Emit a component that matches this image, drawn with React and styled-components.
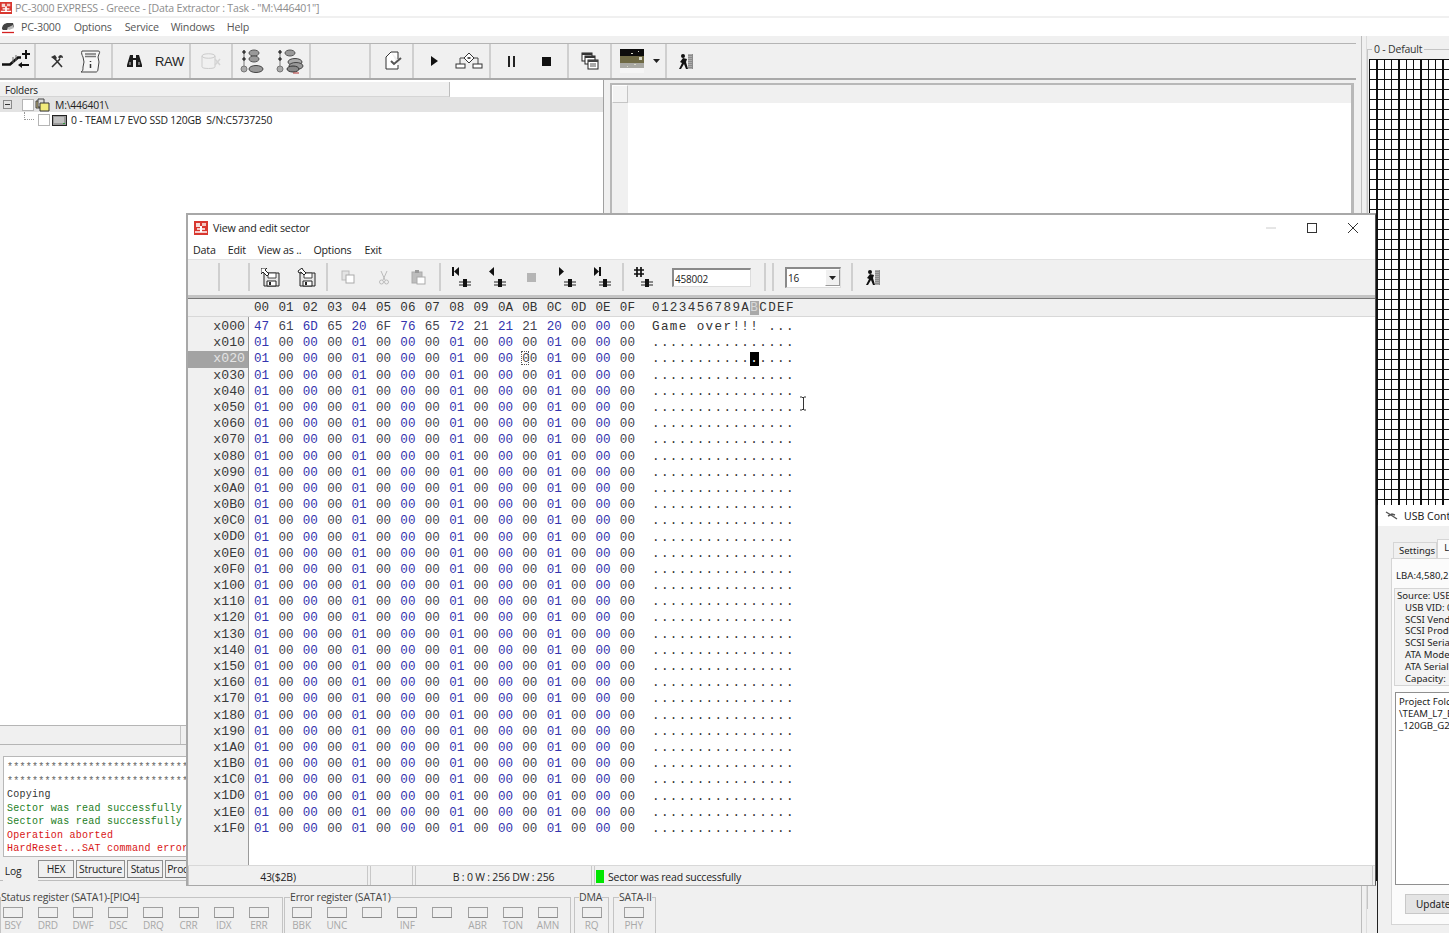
import React from "react";
import styled, { createGlobalStyle } from "styled-components";

const GlobalStyle = createGlobalStyle`
    html, body { margin: 0; padding: 0; background: #f0f0f0; }
    * { box-sizing: border-box; }
`;

const UI_FONT = `"Open Sans", "Liberation Sans", sans-serif`;
const MONO_FONT = `"Liberation Mono", monospace`;

const Screen = styled.div`
    position: relative;
    width: 1449px;
    height: 933px;
    overflow: hidden;
    background: #f0f0f0;
    font-family: ${UI_FONT};
    font-size: 10px;
    letter-spacing: -0.2px;
    color: #222;
`;

const TitleBar = styled.div`
    height: 16px;
    margin-bottom: 2px;
    display: flex;
    align-items: center;
    gap: 3px;
    background: #fff;
    color: #8d8d8d;
    font-size: 10.6px;
    white-space: nowrap;
`;

const MenuBar = styled.div`
    height: ${(p) => p.$height || 18}px;
    display: flex;
    align-items: center;
    background: #fff;
    color: ${(p) => p.$color || "#555"};
    font-size: 10.7px;
    padding-left: ${(p) => p.$left || 0}px;
`;

const MenuItem = styled.span`
    margin-left: ${(p) => p.$before || 0}px;
    margin-right: ${(p) => p.$gap || 12}px;
`;

const Workspace = styled.div`
    display: flex;
    height: 897px;
`;

const MainColumn = styled.div`
    width: 1360px;
    display: flex;
    flex-direction: column;
    flex: none;
`;

const Splitter = styled.div`
    width: 6px;
    flex: none;
    border-left: 1px solid #bdbdbd;
    border-right: 1px solid #dcdcdc;
    margin-left: 1px;
`;

const Toolbar = styled.div`
    height: 44px;
    margin-right: 4px;
    padding-top: 7px;
    flex: none;
`;

const ToolbarInner = styled.div`
    height: 37px;
    display: flex;
    border-top: 1px solid #b4b4b4;
    border-bottom: 2px solid #a9a9a9;
`;

const ToolGroup = styled.div`
    width: ${(p) => p.$width}px;
    flex: none;
    display: flex;
    align-items: center;
    padding-left: ${(p) => p.$pad || 0}px;
    border-right: ${(p) => (p.$plain ? "0" : "2px solid #cfcfcf")};
`;

const Tool = styled.div`
    width: ${(p) => p.$width}px;
    flex: none;
    display: flex;
    justify-content: center;
    align-items: center;
    font-size: 13px;
    font-family: "Liberation Sans", sans-serif;
    color: #222;
`;

const Svg = styled.svg`
    display: block;
    flex: none;
`;

const TopPanes = styled.div`
    height: 645px;
    flex: none;
    display: flex;
`;

const FolderPane = styled.div`
    width: 604px;
    flex: none;
    background: #fff;
    border-right: 1px solid #a0a0a0;
    padding-top: 2px;
`;

const FolderHeader = styled.div`
    width: 450px;
    height: 15px;
    line-height: 17px;
    padding-left: 5px;
    background: #f0f0f0;
    border-right: 1px solid #bdbdbd;
    border-bottom: 1px solid #d5d5d5;
    color: #222;
`;

const TreeRow = styled.div`
    height: ${(p) => p.$height}px;
    display: flex;
    align-items: center;
    padding-left: ${(p) => p.$indent}px;
    background: ${(p) => (p.$selected ? "#e3e3e3" : "#fff")};
    white-space: pre;
    font-size: 10.4px;
`;

const TreeLabel = styled.span`
    margin-left: ${(p) => p.$left}px;
`;

const Expander = styled.span`
    width: 9px;
    height: 9px;
    margin-right: 10px;
    border: 1px solid #8a8a8a;
    position: relative;
    &::after {
        content: "";
        position: absolute;
        left: 1px;
        top: 3px;
        width: 5px;
        height: 1px;
        background: #333;
    }
`;

const TreeElbow = styled.span`
    width: 10px;
    height: 8px;
    margin: -8px 4px 0 0;
    border-left: 1px dotted #999;
    border-bottom: 1px dotted #999;
`;

const CheckBox = styled.span`
    width: 12px;
    height: 12px;
    flex: none;
    margin-right: ${(p) => p.$gap}px;
    background: #fff;
    border: 1px solid #b5b5b5;
`;

const GridPane = styled.div`
    flex: 1;
    margin: 3px 6px 0 6px;
    display: grid;
    grid-template-columns: 16px 1fr;
    grid-template-rows: 18px 1fr;
    background: #fff;
    border: 2px solid #b8b8b8;
    border-right-width: 3px;
    border-bottom: 0;
`;

const GridCorner = styled.div`
    background: #f3f3f3;
    border: 1px solid #c5c5c5;
    border-top-color: #fff;
    border-left-color: #fff;
`;

const GridHead = styled.div`
    background: #f0f0f0;
`;

const GridSide = styled.div`
    background: #f0f0f0;
`;

const GridBody = styled.div`
    background: #fff;
`;

const ScrollStrip = styled.div`
    height: 20px;
    flex: none;
    border-top: 1px solid #b5b5b5;
    border-bottom: 1px solid #b5b5b5;
    display: flex;
    justify-content: flex-end;
    padding-right: 1176px;
`;

const StripHandle = styled.div`
    width: 4px;
    border-left: 1px solid #c5c5c5;
`;

const LogArea = styled.div`
    height: 115px;
    flex: none;
    padding: 11px 0 3px 3px;
`;

const LogBox = styled.div`
    height: 101px;
    background: #fff;
    border: 1px solid #b8b8b8;
    border-right: 0;
    padding: 4px 0 0 3px;
    overflow: hidden;
`;

const LogLine = styled.div`
    height: 13.5px;
    line-height: 13.5px;
    font-family: ${MONO_FONT};
    font-size: 10px;
    letter-spacing: 0.25px;
    white-space: nowrap;
    color: ${(p) => p.$color || "#333"};
`;

const TabRow = styled.div`
    height: 21px;
    flex: none;
    display: flex;
    align-items: flex-start;
    padding-left: 3px;
    border-bottom: 1px solid #bdbdbd;
`;

const LogTab = styled.div`
    width: ${(p) => p.$width}px;
    height: 18px;
    margin-right: ${(p) => p.$gap || 0}px;
    display: flex;
    align-items: center;
    justify-content: center;
    font-size: 10.3px;
    background: #f0f0f0;
    border: 1px solid #8f8f8f;
    border-bottom-color: #777;
`;

const ActiveLogTab = styled.div`
    width: 35px;
    height: 21px;
    padding: 1px 15px 0 0;
    display: flex;
    align-items: center;
    justify-content: center;
    font-size: 10.3px;
    background: #f0f0f0;
`;

const Registers = styled.div`
    display: flex;
    flex: 1;
    align-items: flex-start;
    padding-top: 11px;
`;

const RegisterGroup = styled.fieldset`
    width: ${(p) => p.$width}px;
    height: 60px;
    flex: none;
    margin: 0 ${(p) => p.$gap || 0}px 0 0;
    padding: 0;
    border: 1px solid #c4c4c4;
    min-width: 0;
`;

const RegisterLegend = styled.legend`
    padding: 0;
    margin-left: ${(p) => p.$left || 0}px;
    font-size: 10.5px;
    line-height: 11px;
    color: #444;
    white-space: nowrap;
`;

const LedRow = styled.div`
    display: flex;
    margin: 4px 0 0 ${(p) => p.$left || 0}px;
`;

const Led = styled.div`
    width: 35.2px;
    flex: none;
    display: flex;
    flex-direction: column;
    align-items: center;
    gap: 1px;
    color: #a8a8a8;
    font-size: 10px;
    line-height: 13px;
`;

const LedBox = styled.div`
    width: 20px;
    height: 11px;
    background: #f0f0f0;
    border: 1px solid #a0a0a0;
    border-bottom-color: #8c8c8c;
`;

const Sidebar = styled.div`
    flex: 1;
    padding-top: 7px;
    min-width: 0;
`;

const BlockGroup = styled.div`
    position: relative;
    height: 860px;
    border-top: 1px solid #c4c4c4;
    border-left: 1px solid #c4c4c4;
    padding: 9px 0 0 1px;
    margin-top: 6px;
`;

const BlockLegend = styled.span`
    position: absolute;
    top: -6px;
    left: 4px;
    padding: 0 2px;
    background: #f0f0f0;
    font-size: 10.5px;
    line-height: 11px;
    color: #333;
`;

const BlockMap = styled.div`
    height: 822px;
    background-color: #fff;
    background-image:
        repeating-linear-gradient(to right, #111 0 1.3px, transparent 1.3px 7.33px),
        repeating-linear-gradient(to bottom, #111 0 1.2px, transparent 1.2px 10px),
        repeating-linear-gradient(to right, transparent 0 7.33px, #8a8a8a 7.33px 8.8px, transparent 8.8px 14.66px);
`;

/* floating child windows */
const SectorWindow = styled.div`
    position: absolute;
    left: 186px;
    top: 213px;
    width: 1190px;
    height: 673px;
    display: flex;
    flex-direction: column;
    background: #f0f0f0;
    border: 1px solid #a8a8a8;
    border-top-width: 2px;
    border-left-width: 2px;
    border-right: 1px solid #555;
`;

const WindowTitle = styled.div`
    height: 25px;
    flex: none;
    display: flex;
    align-items: center;
    gap: 5px;
    padding: 0 4px 0 6px;
    background: #fff;
    font-size: 10.7px;
    color: #222;
`;

const TitleText = styled.span`
    flex: 1;
`;

const WindowControl = styled.div`
    width: 36px;
    flex: none;
    display: flex;
    justify-content: center;
`;

const SectorToolbar = styled.div`
    height: 39px;
    flex: none;
    display: flex;
    align-items: center;
    padding-bottom: 1px;
    background: #f0f0f0;
    border-top: 1px solid #e2e2e2;
    border-bottom: 3px solid #c4c4c4;
`;

const SectorGroup = styled.div`
    width: ${(p) => p.$width}px;
    height: 28px;
    flex: none;
    display: flex;
    align-items: center;
    padding-left: ${(p) => p.$pad || 0}px;
    border-right: ${(p) => (p.$plain ? "0" : "2px solid #cfcfcf")};
`;

const SectorInput = styled.div`
    width: 79px;
    height: 19px;
    margin-left: 18px;
    background: #fff;
    padding-left: 1px;
    line-height: 18px;
    font-size: 10px;
    border: 1px solid #fff;
    border-top: 2px solid #8a8a8a;
    border-left: 2px solid #8a8a8a;
    border-bottom-color: #ddd;
    border-right-color: #ddd;
`;

const SectorSelect = styled.div`
    width: 56px;
    height: 21px;
    display: flex;
    justify-content: space-between;
    align-items: center;
    background: #fff;
    padding-left: 1px;
    font-size: 10px;
    border: 1px solid #ddd;
    border-top: 2px solid #8a8a8a;
    border-left: 2px solid #8a8a8a;
`;

const SelectButton = styled.div`
    width: 15px;
    height: 17px;
    display: flex;
    justify-content: center;
    align-items: center;
    background: #f0f0f0;
    border: 1px solid #999;
    border-top-color: #fff;
    border-left-color: #fff;
`;

const HexHeader = styled.div`
    height: 19px;
    flex: none;
    display: flex;
    align-items: center;
    padding-left: 66px;
    background: #f0f0f0;
    border-top: 1px solid #777;
    border-bottom: 1px solid #d8d8d8;
    font-family: ${MONO_FONT};
    font-size: 12.6px;
    letter-spacing: 0;
    color: #333;
`;

const HeaderCell = styled.span`
    width: 24.4px;
    flex: none;
`;

const HexBody = styled.div`
    flex: 1;
    display: flex;
    min-height: 0;
`;

const Gutter = styled.div`
    width: 61px;
    flex: none;
    padding-top: 2px;
    background: #f0f0f0;
    border-right: 1px solid #9a9a9a;
`;

const GutterLabel = styled.div`
    height: 16.2px;
    line-height: 16.2px;
    padding-right: 3px;
    text-align: right;
    font-family: ${MONO_FONT};
    font-size: 13.2px;
    letter-spacing: 0;
    color: ${(p) => (p.$selected ? "#e4e4e4" : "#3a3a3a")};
    background: ${(p) => (p.$selected ? "#a3a3a3" : "transparent")};
`;

const HexData = styled.div`
    flex: 1;
    background: #fff;
    padding: 2px 0 0 5px;
`;

const HexRow = styled.div`
    height: 16.2px;
    display: flex;
    align-items: center;
    font-family: ${MONO_FONT};
    font-size: 12.6px;
    letter-spacing: 0;
`;

const HexCell = styled.span`
    width: 24.4px;
    flex: none;
    color: ${(p) => (p.$blue ? "#3434ae" : "#45454f")};
    position: relative;
`;

const CellCursor = styled.span`
    position: absolute;
    left: -1px;
    top: -1px;
    width: 8px;
    height: 14px;
    border: 1px dotted #555;
`;

const AsciiText = styled.div`
    display: flex;
    margin-left: 7px;
    color: #333;
`;

const AsciiChar = styled.span`
    width: 8.95px;
    flex: none;
    text-align: center;
    white-space: pre;
    color: ${(p) => p.$color || "inherit"};
    background: ${(p) => p.$back || "transparent"};
`;

const SectorStatus = styled.div`
    height: 20px;
    flex: none;
    display: flex;
    border-top: 1px solid #d8d8d8;
`;

const StatusCell = styled.div`
    width: ${(p) => p.$width}px;
    flex: ${(p) => (p.$grow ? 1 : "none")};
    margin-right: 2px;
    display: flex;
    align-items: center;
    justify-content: ${(p) => (p.$grow ? "flex-start" : "center")};
    gap: 4px;
    padding-top: 2px;
    border-right: 1px solid #c8c8c8;
    border-left: 1px solid #c8c8c8;
    font-size: 10.5px;
    color: #222;
`;

const GreenBlock = styled.span`
    width: 8px;
    height: 13px;
    margin-left: 1px;
    background: #00e600;
`;

const UsbWindow = styled.div`
    position: absolute;
    left: 1377px;
    top: 505px;
    width: 90px;
    height: 440px;
    background: #f0f0f0;
    border-left: 1px solid #222;
    white-space: nowrap;
    font-family: "Noto Sans", sans-serif;
`;

const UsbTitle = styled.div`
    height: 21px;
    display: flex;
    align-items: center;
    gap: 6px;
    padding-left: 7px;
    background: #fff;
    font-size: 10.5px;
    letter-spacing: 0;
`;

const UsbTabs = styled.div`
    display: flex;
    align-items: flex-end;
    height: 32px;
    padding-left: 15px;
`;

const UsbTab = styled.div`
    width: ${(p) => p.$width}px;
    height: ${(p) => (p.$active ? 19 : 16)}px;
    padding-left: ${(p) => (p.$active ? 6 : 5)}px;
    line-height: 15px;
    font-size: 9.5px;
    letter-spacing: 0;
    background: ${(p) => (p.$active ? "#fbfbfb" : "#f0f0f0")};
    border: 1px solid #d5d5d5;
    border-bottom: 0;
`;

const UsbPanel = styled.div`
    margin-left: 13px;
    height: 367px;
    background: #fbfbfb;
    border: 1px solid #d5d5d5;
    padding: 9px 0 0 4px;
    font-size: 9.6px;
    letter-spacing: 0;
`;

const UsbLba = styled.div`
    height: 20px;
    line-height: 16px;
`;

const UsbInfo = styled.div`
    height: 98px;
    margin-left: -2px;
    padding: 1px 0 0 2px;
    background: #f3f3f3;
    border-top: 1px solid #d5d5d5;
    border-left: 1px solid #d5d5d5;
    border-bottom: 1px solid #d5d5d5;
`;

const UsbLine = styled.div`
    height: 11.8px;
    line-height: 12px;
    padding-left: ${(p) => p.$indent || 0}px;
`;

const UsbProject = styled.div`
    height: 193px;
    margin: 6px 0 0 -1px;
    padding: 3px 0 0 3px;
    background: #fff;
    border: 1px solid #8f8f8f;
    border-right: 0;
`;

const UsbButton = styled.div`
    width: 60px;
    height: 20px;
    margin: 9px 0 0 9px;
    padding-left: 10px;
    line-height: 19px;
    background: #e4e4e4;
    border: 1px solid #c8c8c8;
    font-size: 10px;
`;

const CursorMark = styled.div`
    position: absolute;
    left: 799px;
    top: 396px;
`;

/* ---------- icons ---------- */

const RedLogo = ({ size = 14 }) => (
    <Svg width={size} height={size} viewBox="0 0 14 14">
        <rect width="14" height="14" fill="#d8372f" />
        <rect x="2" y="2" width="4" height="4" fill="#f6dcd8" />
        <rect x="8" y="2" width="4" height="3" fill="#f3c6c0" />
        <path d="M1 11h12M3 8h8" stroke="#fff" strokeWidth="1.4" />
        <rect x="6" y="5" width="2" height="6" fill="#fff" />
    </Svg>
);

const AppGlyph = () => (
    <Svg width={14} height={14} viewBox="0 0 14 14">
        <path d="M1 9c0-4 3-6 6-6h5l1 4H8l-2 3H2z" fill="#444" />
        <path d="M6 8l6-3 1 3-5 2z" fill="#bbb" />
        <path d="M1 12.5h12" stroke="#d42020" strokeWidth="1.3" />
    </Svg>
);

const LinkIcon = () => (
    <Svg width={30} height={24} viewBox="0 0 30 24">
        <path d="M1 15.5h8l8-7h3" stroke="#111" strokeWidth="2.6" fill="none" />
        <path d="M25 1v9M21 5h8" stroke="#111" strokeWidth="2" />
        <path d="M19 16h9" stroke="#111" strokeWidth="2" />
        <path d="M21 13v6l-4-3z" fill="#111" />
        <path d="M12 8v6M15 6v6" stroke="#666" strokeWidth="1" />
    </Svg>
);

const ToolsIcon = () => (
    <Svg width={14} height={14} viewBox="0 0 14 14">
        <path d="M2 13l8-8M12 13L5 5" stroke="#333" strokeWidth="1.6" fill="none" />
        <path d="M1 3l4-2 2 3-2 2zM10 1c2 0 3 1 3 3l-2-.5-1.5 1.5L8 3z" fill="#333" />
    </Svg>
);

const ScrollIcon = () => (
    <Svg width={21} height={23} viewBox="0 0 21 23">
        <path d="M2 1h16c2 0 2 1 1 3l-1 3 1 5-1 7c0 2-1 3-2 3H1c2-1 2-2 2-5l1-5-1-5C2 5 1 3 2 1z" fill="#f6f6f6" stroke="#444" />
        <path d="M5 4h11M5 6.5h11" stroke="#777" strokeWidth="1.3" />
        <path d="M10.5 11v1M10.5 14v4" stroke="#333" strokeWidth="1.5" />
    </Svg>
);

const BinocularsIcon = () => (
    <Svg width={15} height={14} viewBox="0 0 15 14">
        <path d="M3 1h3v3h3V1h3l3 10v2H9V6H6v7H0v-2z" fill="#1c1c1c" />
        <path d="M2 8h2v3H2zM11 8h2v3h-2z" fill="#777" />
    </Svg>
);

const DiskGhostIcon = () => (
    <Svg width={22} height={18} viewBox="0 0 22 18">
        <path d="M2 4c0-3 13-3 13 0v11c0 2-13 2-13 0z" fill="none" stroke="#ccc" />
        <path d="M2 4c0 3 13 3 13 0" fill="none" stroke="#ccc" />
        <path d="M15 7l5 6M20 7l-5 6" stroke="#d4d4d4" strokeWidth="1.5" />
    </Svg>
);

const TreeIcon = ({ stacked }) => (
    <Svg width={28} height={26} viewBox="0 0 28 26">
        <path d="M4 2v20" stroke="#777" />
        <path d="M2 4h4M4 2v4M2 11h4M4 9v4" stroke="#111" />
        <circle cx="4" cy="21" r="3" fill="#aaa" stroke="#777" />
        <ellipse cx="14" cy="5" rx="5" ry="3" fill="#999" stroke="#555" />
        {stacked ? (
            <>
                <ellipse cx="19" cy="14" rx="7" ry="3.5" fill="#aaa" stroke="#444" />
                <ellipse cx="20" cy="18" rx="7" ry="3.5" fill="#999" stroke="#444" />
                <ellipse cx="17" cy="21" rx="6" ry="3" fill="#888" stroke="#333" />
                <path d="M17 25h6" stroke="#b03030" />
            </>
        ) : (
            <>
                <ellipse cx="14" cy="11" rx="5" ry="3" fill="#999" stroke="#555" />
                <ellipse cx="16" cy="21" rx="7" ry="3.5" fill="#999" stroke="#444" />
            </>
        )}
    </Svg>
);

const PageIcon = () => (
    <Svg width={20} height={20} viewBox="0 0 20 20">
        <path d="M7 1h7v7M7 1L2 6v12h12v-4" fill="#fff" stroke="#333" />
        <path d="M7 10l3 3 7-6" fill="none" stroke="#555" strokeWidth="2" />
    </Svg>
);

const PlayIcon = () => (
    <Svg width={7} height={10} viewBox="0 0 7 10">
        <path d="M0 0l7 5-7 5z" fill="#111" />
    </Svg>
);

const FlowIcon = () => (
    <Svg width={28} height={18} viewBox="0 0 28 18">
        <path d="M14 1l5 5-5 5-5-5z" fill="#fff" stroke="#333" />
        <path d="M12.5 5h3v2h-3z" fill="#555" />
        <path d="M9 6H5v6M19 6h4v6" fill="none" stroke="#444" />
        <rect x="1" y="12" width="9" height="4" fill="#fff" stroke="#333" />
        <rect x="18" y="12" width="9" height="4" fill="#fff" stroke="#333" />
    </Svg>
);

const PauseIcon = () => (
    <Svg width={7} height={11} viewBox="0 0 7 11">
        <path d="M0 0h2v11H0zM5 0h2v11H5z" fill="#222" />
    </Svg>
);

const StopIcon = ({ color = "#111", size = 9 }) => (
    <Svg width={size} height={size} viewBox="0 0 9 9">
        <rect width="9" height="9" fill={color} />
    </Svg>
);

const WindowsIcon = () => (
    <Svg width={18} height={18} viewBox="0 0 18 18">
        <rect x="1" y="1" width="10" height="8" fill="#fff" stroke="#222" />
        <rect x="1" y="1" width="10" height="2" fill="#333" />
        <rect x="4" y="4" width="10" height="8" fill="#fff" stroke="#222" />
        <rect x="4" y="4" width="10" height="2" fill="#333" />
        <rect x="7" y="8" width="10" height="9" fill="#fff" stroke="#222" />
        <rect x="7" y="8" width="10" height="2" fill="#444" />
        <path d="M9 12h6M9 14h6" stroke="#555" />
    </Svg>
);

const ThumbIcon = () => (
    <Svg width={24} height={24} viewBox="0 0 24 24">
        <rect width="24" height="24" fill="#fff" />
        <rect width="24" height="8" fill="#0d0d0d" />
        <rect y="7" width="24" height="7" fill="#6f6a45" />
        <rect y="14" width="24" height="5" fill="#a9a9a3" />
        <path d="M11 4h2v1h-2zM18 2h1v1h-1zM19 8h3v3h-3zM14 15h2v1h-2zM7 17h1v1H7z" fill="#d8d8c8" />
        <rect y="19" width="24" height="5" fill="#f6f6f6" />
    </Svg>
);

const DropArrow = ({ size = 7 }) => (
    <Svg width={size} height={4} viewBox="0 0 7 4">
        <path d="M0 0h7L3.5 4z" fill="#222" />
    </Svg>
);

const ExitIcon = () => (
    <Svg width={16} height={17} viewBox="0 0 16 17">
        <circle cx="5" cy="3" r="2" fill="#111" />
        <path d="M5 5l-3 4 2 1-3 6h2l3-5 2 5h2L8 9l1-3z" fill="#111" />
        <rect x="10" y="1" width="5" height="15" fill="#8b8b8b" />
        <path d="M11 1v15M13 1v15" stroke="#ccc" strokeDasharray="1 1" />
    </Svg>
);

const SaveIcon = ({ rotated }) => (
    <Svg width={19} height={19} viewBox="0 0 19 19">
        <path d="M3 5h15v13H3z" fill="#e8e8e8" stroke="#222" />
        <path d="M6 13h9v5H6z" fill="#fff" stroke="#222" />
        <rect x="8" y="14" width="2" height="3" fill="#222" />
        <path d="M7 5h8v5H7z" fill="#fff" stroke="#444" />
        <path
            d={rotated ? "M1 3l4-3 1 2 3 3-2 2-3-3-2 1z" : "M0 0h6L4 2l4 4-2 2-4-4-2 2z"}
            fill="#fff"
            stroke="#222"
        />
    </Svg>
);

const CopyGhost = () => (
    <Svg width={14} height={14} viewBox="0 0 14 14">
        <rect x="1" y="1" width="7" height="9" fill="#e4e4e4" stroke="#bbb" />
        <rect x="5" y="5" width="8" height="8" fill="#fff" stroke="#aaa" />
    </Svg>
);

const CutGhost = () => (
    <Svg width={10} height={15} viewBox="0 0 10 15">
        <path d="M2 1l4 9M8 1L4 10" stroke="#bbb" fill="none" />
        <circle cx="2.5" cy="12" r="2" fill="none" stroke="#bbb" />
        <circle cx="7.5" cy="12" r="2" fill="none" stroke="#bbb" />
    </Svg>
);

const PasteGhost = () => (
    <Svg width={15} height={15} viewBox="0 0 15 15">
        <rect x="1" y="2" width="10" height="11" fill="#bdbdbd" stroke="#aaa" />
        <rect x="4" y="0" width="4" height="3" fill="#999" />
        <rect x="6" y="7" width="8" height="7" fill="#fff" stroke="#aaa" />
    </Svg>
);

const NavIcon = ({ dir, bar }) => (
    <Svg width={19} height={22} viewBox="0 0 19 22">
        {dir === "left" ? <path d="M7 1v9L2 5.5z" fill="#111" /> : <path d="M2 1v9l5-4.5z" fill="#111" />}
        {bar && <rect x={dir === "left" ? 0 : 7} y="1" width="2" height="9" fill="#111" />}
        <path d="M7 16h12M7 19h12" stroke="#222" />
        <rect x="11" y="13" width="4" height="8" fill="#111" />
    </Svg>
);

const HashIcon = () => (
    <Svg width={20} height={22} viewBox="0 0 20 22">
        <path d="M4 1v10M8 1v10M1 4h10M1 8h10" stroke="#111" strokeWidth="1.7" />
        <path d="M8 16h12M8 19h12" stroke="#222" />
        <rect x="12" y="13" width="4" height="8" fill="#111" />
    </Svg>
);

const MinimizeIcon = () => (
    <Svg width={10} height={10} viewBox="0 0 10 10">
        <path d="M0 5h10" stroke="#ccc" />
    </Svg>
);

const MaximizeIcon = () => (
    <Svg width={10} height={10} viewBox="0 0 10 10">
        <rect x="0.5" y="0.5" width="9" height="9" fill="none" stroke="#333" />
    </Svg>
);

const CloseIcon = () => (
    <Svg width={10} height={10} viewBox="0 0 10 10">
        <path d="M0 0l10 10M10 0L0 10" stroke="#333" />
    </Svg>
);

const FolderStackIcon = () => (
    <Svg width={15} height={14} viewBox="0 0 15 14">
        <path d="M1 3h6v7H1z" fill="#c9b97a" stroke="#444" />
        <path d="M3 1h6v8H3z" fill="#ddd" stroke="#444" />
        <path d="M5 5h9v8H5z" fill="#f2ec7c" stroke="#333" />
    </Svg>
);

const DriveIcon = () => (
    <Svg width={15} height={11} viewBox="0 0 15 11">
        <rect x="0.5" y="0.5" width="14" height="10" fill="#9a9a9a" stroke="#222" />
        <path d="M2 3h10M2 5h10M2 7h10" stroke="#e8e8e8" />
        <rect x="11" y="8" width="2" height="1" fill="#2e9c3b" />
    </Svg>
);

const UsbGlyph = () => (
    <Svg width={13} height={9} viewBox="0 0 13 9">
        <path d="M1 1l5 3 6 4M3 5l4-2 3 1" stroke="#555" strokeWidth="1.4" fill="none" />
    </Svg>
);

const TextCursor = () => (
    <Svg width={9} height={15} viewBox="0 0 9 15">
        <path d="M1 1h2l1 1 1-1h2M4.5 2v11M1 14h2l1-1 1 1h2" stroke="#333" fill="none" />
    </Svg>
);

/* ---------- data ---------- */

const HEX_COLUMNS = ["00", "01", "02", "03", "04", "05", "06", "07", "08", "09", "0A", "0B", "0C", "0D", "0E", "0F"];
const FIRST_ROW = ["47", "61", "6D", "65", "20", "6F", "76", "65", "72", "21", "21", "21", "20", "00", "00", "00"];
const PLAIN_ROW = ["01", "00", "00", "00", "01", "00", "00", "00", "01", "00", "00", "00", "01", "00", "00", "00"];
const ROW_LABELS = Array.from({ length: 32 }, (_, i) => "x" + (i * 16).toString(16).toUpperCase().padStart(3, "0"));

const STATUS_LEDS = ["BSY", "DRD", "DWF", "DSC", "DRQ", "CRR", "IDX", "ERR"];
const ERROR_LEDS = ["BBK", "UNC", "", "INF", "", "ABR", "TON", "AMN"];

const USB_LINES = [
    ["Source: USB", 0],
    ["USB VID: 0", 8],
    ["SCSI Vendor", 8],
    ["SCSI Product", 8],
    ["SCSI Serial", 8],
    ["ATA Model", 8],
    ["ATA Serial", 8],
    ["Capacity:", 8],
];

const App = () => (
    <Screen>
        <GlobalStyle />
        <TitleBar>
            <RedLogo size={12} />
            <span>PC-3000 EXPRESS - Greece - [Data Extractor : Task - "M:\446401"]</span>
        </TitleBar>
        <MenuBar $left={1}>
            <AppGlyph />
            <MenuItem $before={6} $gap={13}>PC-3000</MenuItem>
            <MenuItem $gap={13}>Options</MenuItem>
            <MenuItem $gap={12}>Service</MenuItem>
            <MenuItem $gap={12}>Windows</MenuItem>
            <MenuItem>Help</MenuItem>
        </MenuBar>
        <Workspace>
            <MainColumn>
                <Toolbar>
                    <ToolbarInner>
                        <ToolGroup $width={36}><Tool $width={32}><LinkIcon /></Tool></ToolGroup>
                        <ToolGroup $width={77}>
                            <Tool $width={41}><ToolsIcon /></Tool>
                            <Tool $width={27}><ScrollIcon /></Tool>
                        </ToolGroup>
                        <ToolGroup $width={78}>
                            <Tool $width={42}><BinocularsIcon /></Tool>
                            <Tool $width={29}>RAW</Tool>
                        </ToolGroup>
                        <ToolGroup $width={42}><Tool $width={40}><DiskGhostIcon /></Tool></ToolGroup>
                        <ToolGroup $width={78}>
                            <Tool $width={41}><TreeIcon /></Tool>
                            <Tool $width={31}><TreeIcon stacked /></Tool>
                        </ToolGroup>
                        <ToolGroup $width={60} />
                        <ToolGroup $width={43}><Tool $width={45}><PageIcon /></Tool></ToolGroup>
                        <ToolGroup $width={77}>
                            <Tool $width={40}><PlayIcon /></Tool>
                            <Tool $width={30}><FlowIcon /></Tool>
                        </ToolGroup>
                        <ToolGroup $width={78}>
                            <Tool $width={40}><PauseIcon /></Tool>
                            <Tool $width={30}><StopIcon /></Tool>
                        </ToolGroup>
                        <ToolGroup $width={43}><Tool $width={42}><WindowsIcon /></Tool></ToolGroup>
                        <ToolGroup $width={55} $pad={8}>
                            <Tool $width={24}><ThumbIcon /></Tool>
                            <Tool $width={24}><DropArrow /></Tool>
                        </ToolGroup>
                        <ToolGroup $width={40} $plain><Tool $width={38}><ExitIcon /></Tool></ToolGroup>
                    </ToolbarInner>
                </Toolbar>
                <TopPanes>
                    <FolderPane>
                        <FolderHeader>Folders</FolderHeader>
                        <TreeRow $height={15} $indent={3} $selected>
                            <Expander />
                            <CheckBox $gap={1} />
                            <FolderStackIcon />
                            <TreeLabel $left={5}>M:\446401\</TreeLabel>
                        </TreeRow>
                        <TreeRow $height={16} $indent={24}>
                            <TreeElbow />
                            <CheckBox $gap={2} />
                            <DriveIcon />
                            <TreeLabel $left={4}>0 - TEAM L7 EVO SSD 120GB  S/N:C5737250</TreeLabel>
                        </TreeRow>
                    </FolderPane>
                    <GridPane>
                        <GridCorner />
                        <GridHead />
                        <GridSide />
                        <GridBody />
                    </GridPane>
                </TopPanes>
                <ScrollStrip><StripHandle /></ScrollStrip>
                <LogArea>
                    <LogBox>
                        <LogLine $color="#666">******************************</LogLine>
                        <LogLine $color="#666">******************************</LogLine>
                        <LogLine>Copying</LogLine>
                        <LogLine $color="#1d7d1d">Sector was read successfully</LogLine>
                        <LogLine $color="#1d7d1d">Sector was read successfully</LogLine>
                        <LogLine $color="#d81414">Operation aborted</LogLine>
                        <LogLine $color="#d81414">HardReset...SAT command error</LogLine>
                    </LogBox>
                </LogArea>
                <TabRow>
                    <ActiveLogTab>Log</ActiveLogTab>
                    <LogTab $width={36} $gap={2}>HEX</LogTab>
                    <LogTab $width={49} $gap={2}>Structure</LogTab>
                    <LogTab $width={36} $gap={2}>Status</LogTab>
                    <LogTab $width={40}>Process</LogTab>
                </TabRow>
                <Registers>
                    <RegisterGroup $width={283} $gap={1}>
                        <RegisterLegend>Status register (SATA1)-[PIO4]</RegisterLegend>
                        <LedRow $left={-6}>
                            {STATUS_LEDS.map((name) => (
                                <Led key={name}><LedBox />{name}</Led>
                            ))}
                        </LedRow>
                    </RegisterGroup>
                    <RegisterGroup $width={287} $gap={3}>
                        <RegisterLegend $left={5}>Error register (SATA1)</RegisterLegend>
                        <LedRow $left={-1}>
                            {ERROR_LEDS.map((name, i) => (
                                <Led key={i}><LedBox />{name}</Led>
                            ))}
                        </LedRow>
                    </RegisterGroup>
                    <RegisterGroup $width={35} $gap={4}>
                        <RegisterLegend $left={4}>DMA</RegisterLegend>
                        <LedRow $left={-1}><Led><LedBox />RQ</Led></LedRow>
                    </RegisterGroup>
                    <RegisterGroup $width={43} $gap={0}>
                        <RegisterLegend $left={5}>SATA-II</RegisterLegend>
                        <LedRow $left={2}><Led><LedBox />PHY</Led></LedRow>
                    </RegisterGroup>
                </Registers>
            </MainColumn>
            <Splitter />
            <Sidebar>
                <BlockGroup>
                    <BlockLegend>0 - Default</BlockLegend>
                    <BlockMap />
                </BlockGroup>
            </Sidebar>
        </Workspace>

        <SectorWindow>
            <WindowTitle>
                <RedLogo />
                <TitleText>View and edit sector</TitleText>
                <WindowControl><MinimizeIcon /></WindowControl>
                <WindowControl><MaximizeIcon /></WindowControl>
                <WindowControl><CloseIcon /></WindowControl>
            </WindowTitle>
            <MenuBar $left={5} $height={19} $color="#222">
                <MenuItem $gap={12}>Data</MenuItem>
                <MenuItem $gap={12}>Edit</MenuItem>
                <MenuItem $gap={12}>View as ..</MenuItem>
                <MenuItem $gap={13}>Options</MenuItem>
                <MenuItem>Exit</MenuItem>
            </MenuBar>
            <SectorToolbar>
                <SectorGroup $width={32} />
                <SectorGroup $width={30} />
                <SectorGroup $width={78}>
                    <Tool $width={40}><SaveIcon /></Tool>
                    <Tool $width={32}><SaveIcon rotated /></Tool>
                </SectorGroup>
                <SectorGroup $width={113}>
                    <Tool $width={40}><CopyGhost /></Tool>
                    <Tool $width={31}><CutGhost /></Tool>
                    <Tool $width={38}><PasteGhost /></Tool>
                </SectorGroup>
                <SectorGroup $width={183} $pad={3}>
                    <Tool $width={35}><NavIcon dir="left" bar /></Tool>
                    <Tool $width={35}><NavIcon dir="left" /></Tool>
                    <Tool $width={35}><StopIcon color="#b5b5b5" /></Tool>
                    <Tool $width={35}><NavIcon dir="right" /></Tool>
                    <Tool $width={35}><NavIcon dir="right" bar /></Tool>
                </SectorGroup>
                <SectorGroup $width={142} $pad={8}>
                    <Tool $width={22}><HashIcon /></Tool>
                    <SectorInput>458002</SectorInput>
                </SectorGroup>
                <SectorGroup $width={8} />
                <SectorGroup $width={79} $pad={11}>
                    <SectorSelect>
                        16
                        <SelectButton><DropArrow /></SelectButton>
                    </SectorSelect>
                </SectorGroup>
                <SectorGroup $width={40} $plain $pad={12}>
                    <ExitIcon />
                </SectorGroup>
            </SectorToolbar>
            <HexHeader>
                {HEX_COLUMNS.map((col) => (
                    <HeaderCell key={col}>{col}</HeaderCell>
                ))}
                <AsciiText>
                    {"0123456789ABCDEF".split("").map((c, i) => (
                        <AsciiChar key={i} $back={i === 11 ? "#a9a9a9" : undefined} $color={i === 11 ? "#d8d8d8" : undefined}>{c}</AsciiChar>
                    ))}
                </AsciiText>
            </HexHeader>
            <HexBody>
                <Gutter>
                    {ROW_LABELS.map((label, i) => (
                        <GutterLabel key={label} $selected={i === 2}>{label}</GutterLabel>
                    ))}
                </Gutter>
                <HexData>
                    {ROW_LABELS.map((label, r) => {
                        const cells = r === 0 ? FIRST_ROW : PLAIN_ROW;
                        const ascii = r === 0 ? "Game over!!! ..." : "................";
                        return (
                            <HexRow key={label}>
                                {cells.map((value, c) => (
                                    <HexCell key={c} $blue={c % 2 === 0}>
                                        {value}
                                        {r === 2 && c === 11 && <CellCursor />}
                                    </HexCell>
                                ))}
                                <AsciiText>
                                    {ascii.split("").map((ch, c) => {
                                        const active = r === 2 && c === 11;
                                        return (
                                            <AsciiChar key={c} $back={active ? "#000" : undefined} $color={active ? "#fff" : undefined}>{ch}</AsciiChar>
                                        );
                                    })}
                                </AsciiText>
                            </HexRow>
                        );
                    })}
                </HexData>
            </HexBody>
            <SectorStatus>
                <StatusCell $width={180}>43($2B)</StatusCell>
                <StatusCell $width={43} />
                <StatusCell $width={177}>B : 0 W : 256 DW : 256</StatusCell>
                <StatusCell $grow><GreenBlock />Sector was read successfully</StatusCell>
            </SectorStatus>
        </SectorWindow>

        <CursorMark><TextCursor /></CursorMark>

        <UsbWindow>
            <UsbTitle><UsbGlyph />USB Control</UsbTitle>
            <UsbTabs>
                <UsbTab $width={45}>Settings</UsbTab>
                <UsbTab $width={30} $active>Log</UsbTab>
            </UsbTabs>
            <UsbPanel>
                <UsbLba>LBA:4,580,2</UsbLba>
                <UsbInfo>
                    {USB_LINES.map(([text, indent]) => (
                        <UsbLine key={text} $indent={indent}>{text}</UsbLine>
                    ))}
                </UsbInfo>
                <UsbProject>
                    <UsbLine>Project Folder:</UsbLine>
                    <UsbLine>\TEAM_L7_EVO</UsbLine>
                    <UsbLine>_120GB_G2</UsbLine>
                </UsbProject>
                <UsbButton>Update</UsbButton>
            </UsbPanel>
        </UsbWindow>
    </Screen>
);

export default App;
